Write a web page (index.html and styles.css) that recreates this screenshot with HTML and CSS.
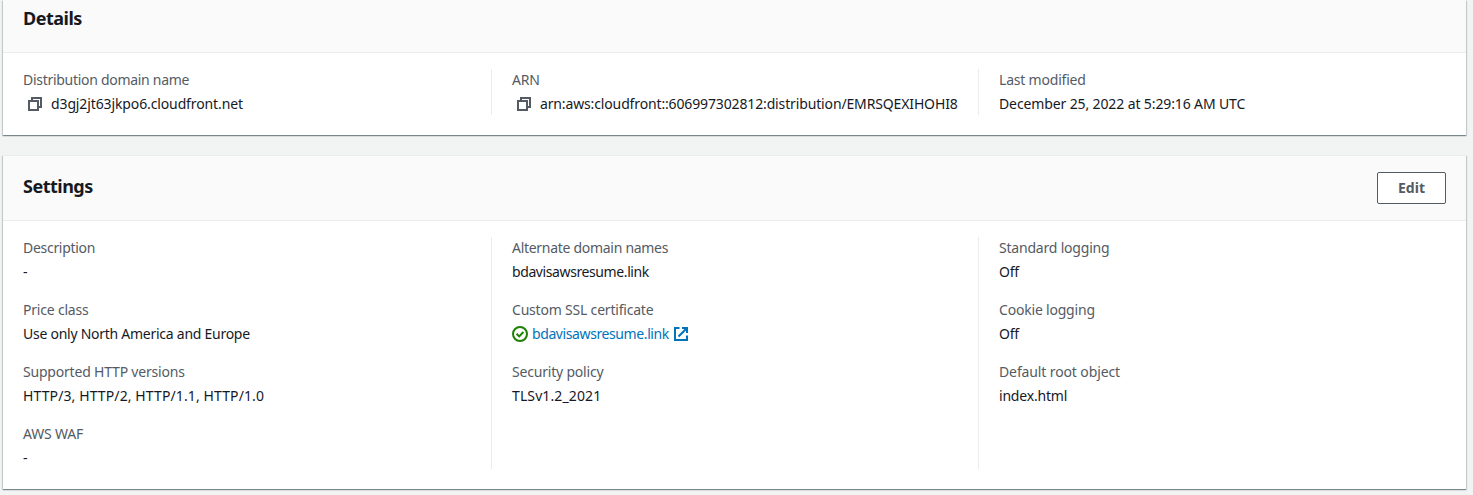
FILE: index.html
```html
<!DOCTYPE html>
<html lang="en">
<head>
<meta charset="utf-8">
<title>Distribution details</title>
<link rel="stylesheet" href="styles.css">
</head>
<body>
<main class="page">
  <section class="card">
    <header class="card-header card-header-cut"><h2>Details</h2></header>
    <div class="columns">
      <div class="column">
        <div class="field"><div class="label tight">Distribution domain name</div>
          <div class="value copy"><svg class="icon" viewBox="0 0 16 16"><path d="M2 5h9v9H2z"/><path d="M5 5V2h9v9h-3"/></svg><span class="loose">d3gj2jt63jkpo6.cloudfront.net</span></div></div>
      </div>
      <div class="column">
        <div class="field"><div class="label">ARN</div>
          <div class="value copy"><svg class="icon" viewBox="0 0 16 16"><path d="M2 5h9v9H2z"/><path d="M5 5V2h9v9h-3"/></svg><span class="arn">arn:aws:cloudfront::606997302812:distribution/EMRSQEXIHOHI8</span></div></div>
      </div>
      <div class="column">
        <div class="field"><div class="label">Last modified</div><div class="value loose">December 25, 2022 at 5:29:16 AM UTC</div></div>
      </div>
    </div>
  </section>
  <section class="card">
    <header class="card-header"><h2>Settings</h2><button class="button">Edit</button></header>
    <div class="columns">
      <div class="column">
        <div class="field"><div class="label tight">Description</div><div class="value">-</div></div>
        <div class="field"><div class="label">Price class</div><div class="value price">Use only North America and Europe</div></div>
        <div class="field"><div class="label">Supported HTTP versions</div><div class="value wide">HTTP/3, HTTP/2, HTTP/1.1, HTTP/1.0</div></div>
        <div class="field"><div class="label">AWS WAF</div><div class="value">-</div></div>
      </div>
      <div class="column">
        <div class="field"><div class="label tight">Alternate domain names</div><div class="value narrow">bdavisawsresume.link</div></div>
        <div class="field"><div class="label">Custom SSL certificate</div>
          <div class="value status"><svg class="icon ok" viewBox="0 0 16 16"><circle cx="8" cy="8" r="7"/><path d="M4.6 7.8l2.6 2.6 4.2-4.4"/></svg><a class="link narrow">bdavisawsresume.link</a><svg class="icon external" viewBox="0 0 16 16"><path d="M6.5 2H2v12h12V9.5"/><path d="M9 2h5v5M13.5 2.5L5.5 10.5"/><path class="arrowhead" d="M10.5 2H14v3.5z"/></svg></div></div>
        <div class="field"><div class="label">Security policy</div><div class="value wide">TLSv1.2_2021</div></div>
      </div>
      <div class="column">
        <div class="field"><div class="label">Standard logging</div><div class="value">Off</div></div>
        <div class="field"><div class="label">Cookie logging</div><div class="value">Off</div></div>
        <div class="field"><div class="label loose">Default root object</div><div class="value">index.html</div></div>
      </div>
    </div>
  </section>
</main>
</body>
</html>
```
FILE: styles.css
```css
* { box-sizing: border-box; }
body {
  margin: 0;
  height: 495px;
  overflow: hidden;
  background: #f2f3f3;
  color: #16191f;
  font: 14px/22px "Noto Sans", "Open Sans", sans-serif;
}
.page {
  display: flex;
  flex-direction: column;
  gap: 20px;
  padding: 0 7px 0 3px;
}
.card {
  background: #fff;
  box-shadow: 0 1px 1px 0 rgba(0, 28, 36, .3), 1px 1px 1px 0 rgba(0, 28, 36, .15), -1px 1px 1px 0 rgba(0, 28, 36, .15);
}
.card-header {
  display: flex;
  justify-content: space-between;
  align-items: center;
  height: 66px;
  padding: 0 20px;
  background: #fafafa;
  border-top: 1px solid #eaeded;
  border-bottom: 1px solid #eaeded;
}
.card-header-cut {
  height: 53px;
  padding-bottom: 16px;
  border-top: 0;
}
h2 {
  margin: 0;
  font-size: 18px;
  line-height: 22px;
  font-weight: 700;
  letter-spacing: -.5px;
}
.card-header:not(.card-header-cut) h2 { padding-bottom: 4px; }
.button {
  width: 69px;
  height: 32px;
  padding: 0;
  background: #fff;
  border: 1px solid #545b64;
  border-radius: 2px;
  color: #545b64;
  font: 700 14px/22px "Noto Sans", "Open Sans", sans-serif;
}
.columns {
  display: grid;
  grid-template-columns: 488px 487px 1fr;
  padding: 16px 0 20px;
}
.column {
  display: flex;
  flex-direction: column;
  gap: 16px;
  padding-left: 20px;
}
.column + .column { border-left: 1px solid #eaeded; }
.field {
  display: flex;
  flex-direction: column;
  gap: 2px;
}
.label { color: #545b64; }
.value { white-space: nowrap; }
.label, .value {
  height: 22px;
  letter-spacing: -.2px;
}
.narrow, .value.narrow { letter-spacing: -.4px; }
.label.tight { letter-spacing: -.29px; }
.value.price { letter-spacing: -.26px; }
.loose, .label.loose, .value.loose { letter-spacing: -.12px; }
.arn { letter-spacing: -.14px; }
.value.wide { letter-spacing: .11px; }
.copy {
  display: flex;
  align-items: center;
  gap: 8px;
  padding-left: 4px;
}
.status {
  display: flex;
  align-items: center;
  gap: 4px;
}
.icon {
  flex: none;
  width: 16px;
  height: 16px;
  fill: none;
  stroke: #545b64;
  stroke-width: 2;
}
.ok { stroke: #1d8102; }
.external { stroke: #0073bb; }
.arrowhead { fill: #0073bb; stroke: none; }
.link { color: #0073bb; }
```
